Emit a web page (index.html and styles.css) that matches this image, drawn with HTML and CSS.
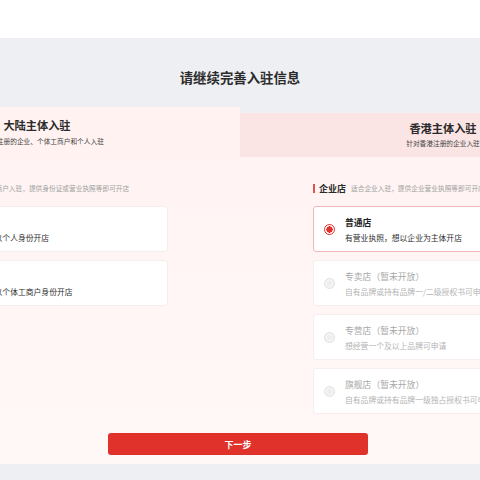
FILE: index.html
```html
<!DOCTYPE html>
<html lang="zh-CN">
<head>
<meta charset="utf-8">
<title>入驻信息</title>
<link rel="stylesheet" href="styles.css">
</head>
<body>
<div class="topbar"></div>
<main class="page">
  <h1 class="page-title">请继续完善入驻信息</h1>
  <section class="panel">
    <div class="tabs">
      <div class="tab tab-active">
        <div class="tab-title">大陆主体入驻</div>
        <div class="tab-sub">针对大陆注册的企业、个体工商户和个人入驻</div>
      </div>
      <div class="tab tab-idle">
        <div class="tab-title">香港主体入驻</div>
        <div class="tab-sub">针对香港注册的企业入驻</div>
      </div>
    </div>
    <div class="columns">
      <div class="column">
        <div class="col-head"><span class="bar"></span><span class="col-name">个人店</span><span class="col-desc">适合个人/个体工商户入驻，提供身份证或营业执照等即可开店</span></div>
        <div class="card">
          <span class="radio radio-off"></span>
          <div class="card-text">
            <div class="card-title">个人店</div>
            <div class="card-desc">无营业执照，想以个人身份开店</div>
          </div>
        </div>
        <div class="card">
          <span class="radio radio-off"></span>
          <div class="card-text">
            <div class="card-title">个体店</div>
            <div class="card-desc">有营业执照，想以个体工商户身份开店</div>
          </div>
        </div>
      </div>
      <div class="column">
        <div class="col-head"><span class="bar"></span><span class="col-name">企业店</span><span class="col-desc">适合企业入驻，提供企业营业执照等即可开店</span></div>
        <div class="card card-selected">
          <span class="radio radio-on"></span>
          <div class="card-text">
            <div class="card-title">普通店</div>
            <div class="card-desc">有营业执照，想以企业为主体开店</div>
          </div>
        </div>
        <div class="card card-disabled">
          <span class="radio radio-disabled"></span>
          <div class="card-text">
            <div class="card-title">专卖店（暂未开放）</div>
            <div class="card-desc">自有品牌或持有品牌一/二级授权书可申请</div>
          </div>
        </div>
        <div class="card card-disabled">
          <span class="radio radio-disabled"></span>
          <div class="card-text">
            <div class="card-title">专营店（暂未开放）</div>
            <div class="card-desc">想经营一个及以上品牌可申请</div>
          </div>
        </div>
        <div class="card card-disabled">
          <span class="radio radio-disabled"></span>
          <div class="card-text">
            <div class="card-title">旗舰店（暂未开放）</div>
            <div class="card-desc">自有品牌或持有品牌一级独占授权书可申请</div>
          </div>
        </div>
      </div>
    </div>
    <div class="actions">
      <button class="next-btn" type="button">下一步</button>
    </div>
  </section>
</main>
</body>
</html>
```
FILE: styles.css
```css
html, body {
  margin: 0;
  padding: 0;
}
body {
  width: 480px;
  height: 480px;
  overflow: hidden;
  background: #ffffff;
  font-family: "Noto Sans CJK SC", "Noto Sans", sans-serif;
  color: #333333;
}
.topbar {
  height: 38px;
  background: #ffffff;
}
.page {
  background: #eeeff2;
  display: flex;
  flex-direction: column;
  align-items: center;
  height: 442px;
}
.page-title {
  margin: 0;
  padding-top: 29px;
  height: 20px;
  line-height: 20px;
  margin-bottom: 20px;
  font-size: 13.4px;
  font-weight: 700;
  color: #2b2b2b;
  text-align: center;
}
.panel {
  width: 812px;
  flex: none;
  display: flex;
  flex-direction: column;
  background: linear-gradient(180deg, #fff3f2 0%, #fff8f7 100%);
}
.tabs {
  display: flex;
  align-items: flex-end;
  background: #eeeff2;
}
.tab {
  flex: 1;
  display: flex;
  flex-direction: column;
  align-items: center;
  box-sizing: border-box;
}
.tab-active {
  height: 50px;
  padding-top: 10px;
  background: #fff2f1;
}
.tab-idle {
  height: 44px;
  padding-top: 7px;
  background: #fbe4e4;
}
.tab-title {
  font-size: 11.2px;
  line-height: 16px;
  font-weight: 700;
  color: #2a2a2a;
}
.tab-active .tab-sub {
  margin-top: 3px;
}
.tab-idle .tab-sub {
  margin-top: 2px;
}
.tab-sub {
  font-size: 6.7px;
  line-height: 10px;
  color: #444444;
  white-space: nowrap;
}
.columns {
  display: grid;
  grid-template-columns: 260px 260px;
  column-gap: 145px;
  padding: 25px 73px 0 74px;
}
.column {
  display: flex;
  flex-direction: column;
  gap: 8px;
}
.col-head {
  display: flex;
  align-items: center;
  height: 12px;
  margin-bottom: 4px;
  white-space: nowrap;
}
.bar {
  width: 2px;
  height: 9px;
  background: #d9534f;
  margin-right: 4px;
}
.col-name {
  font-size: 9px;
  font-weight: 700;
  color: #2a2a2a;
  margin-right: 5px;
}
.col-desc {
  font-size: 6.7px;
  color: #a0a0a0;
}
.card {
  height: 46px;
  box-sizing: border-box;
  background: #ffffff;
  border: 1px solid #f6eeee;
  border-radius: 3px;
  display: flex;
  align-items: center;
  padding-left: 10px;
}
.card-selected {
  border-color: #f1b8b7;
}
.radio {
  width: 11px;
  height: 11px;
  box-sizing: border-box;
  border-radius: 50%;
  flex: none;
  margin-right: 10px;
}
.radio-on {
  border: 1.5px solid #e0312a;
  background: radial-gradient(circle, #e0312a 0 3px, #ffffff 3.3px);
}
.radio-off {
  border: 1px solid #d8d8d8;
  background: #ffffff;
}
.radio-disabled {
  border: 1px solid #e2e2e2;
  background: #eeeeee;
  box-shadow: inset 0 0 0 2px #f4f4f4;
}
.card-text {
  display: flex;
  flex-direction: column;
  gap: 3px;
  white-space: nowrap;
  padding-top: 1px;
}
.card-title {
  font-size: 8.8px;
  line-height: 13px;
  font-weight: 700;
  color: #222222;
}
.card-desc {
  font-size: 7.8px;
  line-height: 12px;
  color: #2e2e2e;
}
.card-disabled .card-title {
  color: #a8a8a8;
  font-weight: 400;
}
.card-disabled .card-desc {
  color: #b4b4b4;
}
.actions {
  display: flex;
  justify-content: center;
  padding: 19px 4px 9px 0;
}
.next-btn {
  width: 260px;
  height: 22px;
  border: none;
  border-radius: 3px;
  background: #e0312a;
  color: #ffffff;
  font-family: "Noto Sans CJK SC", "Noto Sans", sans-serif;
  font-size: 9px;
  font-weight: 700;
  padding: 0;
}
```
